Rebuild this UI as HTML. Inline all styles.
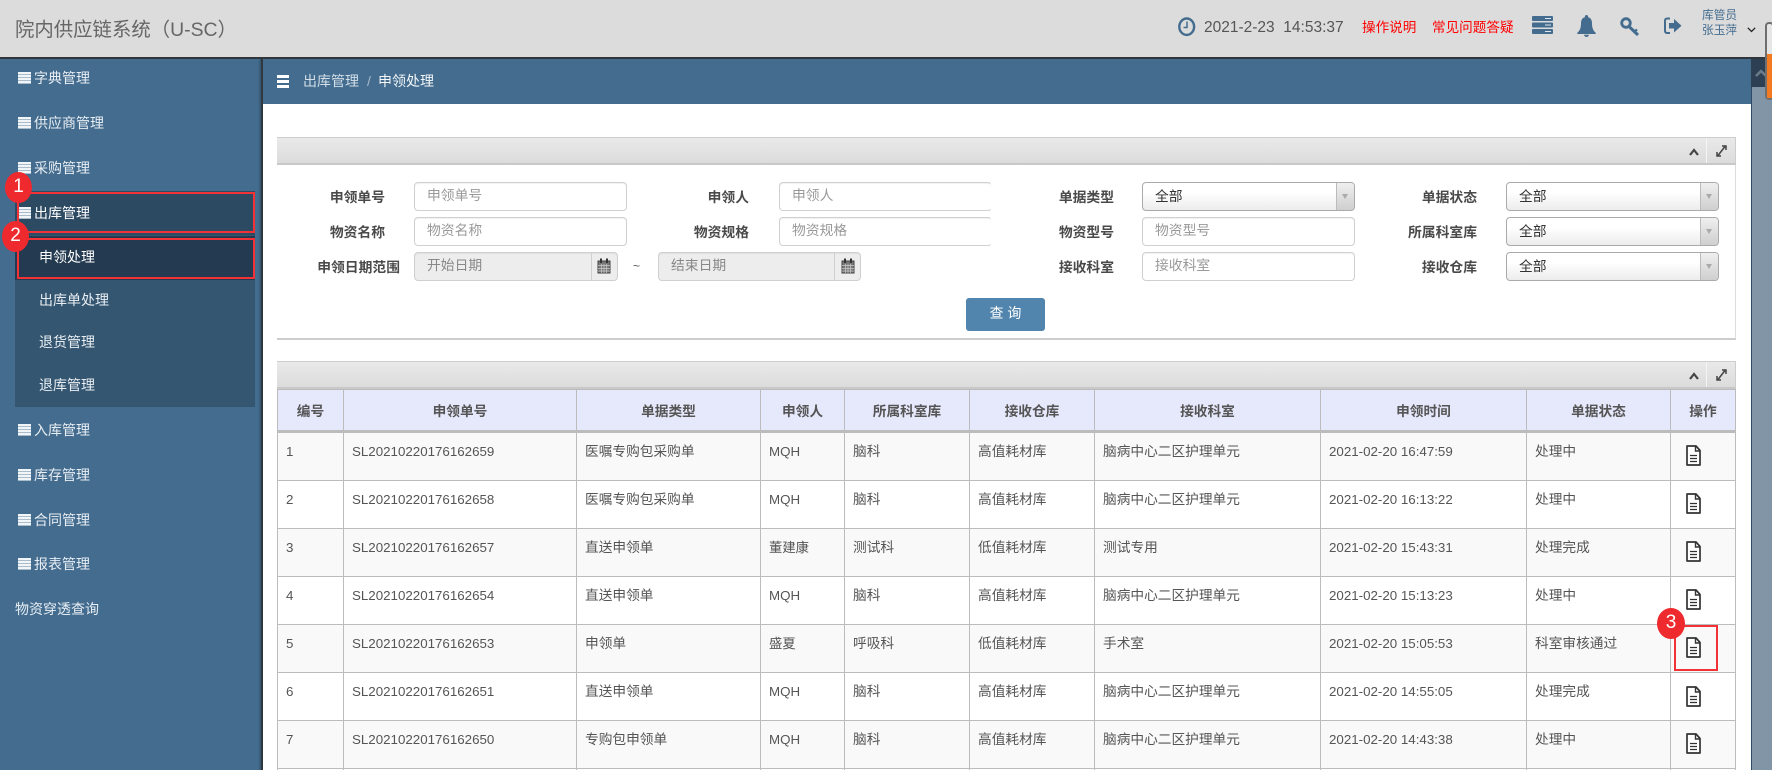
<!DOCTYPE html>
<html lang="zh">
<head>
<meta charset="utf-8">
<title>院内供应链系统</title>
<style>
html,body{margin:0;padding:0;width:1772px;height:770px;overflow:hidden;background:#fff;}
body{position:relative;font-family:"Liberation Sans","Noto Sans CJK SC",sans-serif;font-size:13.33px;color:#555;}
.a{position:absolute;box-sizing:border-box;white-space:nowrap;}
.t{position:absolute;white-space:nowrap;line-height:16px;}
.m{position:absolute;white-space:nowrap;line-height:16px;font-size:14px;color:#e8eef3;}
.li{position:absolute;left:18px;width:13px;height:12px;background:repeating-linear-gradient(180deg,#f2f5f7 0,#f2f5f7 2px,#a9bccb 2px,#a9bccb 3px);}
.red{position:absolute;box-sizing:border-box;border:2px solid #f33237;}
.bdg{position:absolute;box-sizing:border-box;background:#ee2a2e;border-radius:50%;color:#fff;font-size:19px;text-align:center;line-height:30px;width:27px;height:31px;}
.panel-h{position:absolute;left:277px;width:1459px;height:28px;box-sizing:border-box;background:linear-gradient(180deg,#e9e9e9,#dcdcdc);border:1px solid #cdcdcd;border-left:0;border-bottom:2px solid #c8c8c8;}
.lb{position:absolute;white-space:nowrap;line-height:16px;font-weight:bold;font-size:13.8px;color:#4a4a4a;text-align:right;width:120px;}
.in{position:absolute;box-sizing:border-box;height:29px;border:1px solid #d0d0d0;border-radius:4px;background:#fff;box-shadow:inset 0 1px 1px rgba(0,0,0,.06);color:#999;font-size:13.8px;line-height:26px;padding-left:12px;white-space:nowrap;}
.dt{background:#ededed;color:#888;overflow:hidden;}
.dt i{position:absolute;right:0;top:0;width:25px;height:27px;border-left:1px solid #d0d0d0;}
.sel{position:absolute;box-sizing:border-box;height:29px;border:1px solid #aaa;border-radius:4px;background:linear-gradient(180deg,#fff 35%,#ececec);color:#333;font-size:13.8px;line-height:28px;padding-left:12px;overflow:hidden;white-space:nowrap;}
.sel i{position:absolute;right:0;top:0;width:17px;height:27px;border-left:1px solid #bbb;background:linear-gradient(180deg,#efefef,#cfcfcf);}
.sel i:after{content:"";position:absolute;left:5px;top:11px;border:3px solid transparent;border-top:5px solid #aaa;border-bottom:0;}
table{position:absolute;left:277px;top:389px;border-collapse:collapse;table-layout:fixed;width:1458px;font-size:13.33px;color:#555;}
th,td{border:1px solid #bcbcbc;overflow:hidden;white-space:nowrap;padding:0;}
th{background:#e6e8fc;height:40px;font-weight:bold;font-size:13.7px;color:#555;text-align:center;border-bottom:3px solid #bcbcbc;}
td{vertical-align:top;padding:11px 0 0 8px;line-height:16px;height:36px;box-sizing:content-box;}
td:nth-child(3),td:nth-child(5),td:nth-child(6),td:nth-child(7),td:nth-child(9){font-size:13.7px;}
tr.o td{background:#f9f9f9;}
tr.end td{padding:0;height:2px;line-height:2px;font-size:0;border-bottom:0;}
svg{position:absolute;overflow:visible;}
</style>
</head>
<body>
<!-- header -->
<div class="a" style="left:0;top:0;width:1772px;height:57px;background:#dcdcdc;"></div>
<div class="a" style="left:0;top:57px;width:1772px;height:2px;background:#30363c;"></div>
<div class="t" style="left:15px;top:18px;font-size:19.4px;line-height:24px;color:#666;">院内供应链系统（U-SC）</div>

<svg style="left:1178px;top:17px" width="18" height="20" viewBox="0 0 18 20"><ellipse cx="8.7" cy="9.7" rx="7.4" ry="8.2" fill="none" stroke="#436c8f" stroke-width="2.4"/><path d="M9 4.5V10.5H5.5" fill="none" stroke="#436c8f" stroke-width="1.5"/></svg>
<div class="t" style="left:1204px;top:20px;font-size:15.5px;color:#555;">2021-2-23&nbsp; 14:53:37</div>
<div class="t" style="left:1362px;top:20px;font-size:13.6px;color:#f00;">操作说明</div>
<div class="t" style="left:1432px;top:20px;font-size:13.6px;color:#f00;">常见问题答疑</div>

<svg style="left:1532px;top:16px" width="21" height="18" viewBox="0 0 21 18"><g fill="#436c8f"><rect width="21" height="5" rx="1"/><rect y="6.5" width="21" height="5" rx="1"/><rect y="13" width="21" height="5" rx="1"/></g><g fill="#dfe6ec"><rect x="13" y="2" width="6" height="1"/><rect x="13" y="8.5" width="6" height="1"/><rect x="13" y="15" width="6" height="1"/></g></svg>
<svg style="left:1577px;top:15px" width="19" height="22" viewBox="0 0 19 22"><path d="M9.500 0C8.300 0 7.800 1 7.800 2.200C4.800 3 4 5.500 4 8.500C4 12.500 3 15.500 0.300 17.800V19H18.700V17.800C16 15.500 15 12.500 15 8.500C15 5.500 14.200 3 11.200 2.200C11.200 1 10.700 0 9.500 0ZM7 19.800C7.200 21.200 8.200 22 9.500 22C10.800 22 11.800 21.200 12 19.800Z" fill="#436c8f"/></svg>
<svg style="left:1620px;top:17px" width="20" height="20" viewBox="0 0 20 20"><g fill="none" stroke="#436c8f"><circle cx="6" cy="6" r="4.300" stroke-width="2.800"/><path d="M9 9.500L18 18" stroke-width="3"/><path d="M14.500 14.500L17 12.500" stroke-width="2.400"/></g></svg>
<svg style="left:1664px;top:17px" width="18" height="18" viewBox="0 0 18 18"><path d="M6 1.500H3C1.800 1.500 1 2.300 1 3.500V14C1 15.200 1.800 16 3 16H6" fill="none" stroke="#436c8f" stroke-width="2"/><path d="M5 6H10V2L17.500 8.800L10 15.500V11.500H5Z" fill="#436c8f"/></svg>
<div class="t" style="left:1702px;top:9px;font-size:11.7px;line-height:14.500px;color:#436c8f;">库管员<br>张玉萍</div>
<svg style="left:1747px;top:27px" width="9" height="6" viewBox="0 0 9 6"><path d="M.8 .8L4.500 4.500L8.200 .8" fill="none" stroke="#222" stroke-width="1.300"/></svg>

<!-- sidebar -->
<div class="a" style="left:0;top:59px;width:260px;height:711px;background:#436c8f;"></div>
<div class="a" style="left:258px;top:59px;width:3px;height:711px;background:linear-gradient(90deg,#436c8f,#35536c);"></div>
<div class="a" style="left:261px;top:59px;width:2px;height:711px;background:#30383f;"></div>
<div class="a" style="left:15px;top:235px;width:240px;height:172px;background:#355670;"></div>
<div class="a" style="left:15px;top:191px;width:240px;height:44px;background:#2d4a63;"></div>
<div class="a" style="left:15px;top:236px;width:240px;height:44px;background:#243a50;"></div>

<div class="li" style="top:72px"></div><div class="m" style="left:34px;top:70px">字典管理</div>
<div class="li" style="top:117px"></div><div class="m" style="left:34px;top:115px">供应商管理</div>
<div class="li" style="top:162px"></div><div class="m" style="left:34px;top:160px">采购管理</div>
<div class="li" style="top:207px"></div><div class="m" style="left:34px;top:205px;color:#fff">出库管理</div>
<div class="m" style="left:39px;top:249px;color:#fff">申领处理</div>
<div class="m" style="left:39px;top:292px">出库单处理</div>
<div class="m" style="left:39px;top:334px">退货管理</div>
<div class="m" style="left:39px;top:377px">退库管理</div>
<div class="li" style="top:424px"></div><div class="m" style="left:34px;top:422px">入库管理</div>
<div class="li" style="top:469px"></div><div class="m" style="left:34px;top:467px">库存管理</div>
<div class="li" style="top:514px"></div><div class="m" style="left:34px;top:512px">合同管理</div>
<div class="li" style="top:558px"></div><div class="m" style="left:34px;top:556px">报表管理</div>
<div class="m" style="left:15px;top:601px">物资穿透查询</div>

<!-- main top bar -->
<div class="a" style="left:263px;top:59px;width:1488px;height:45px;background:#436c8f;"></div>
<div class="a" style="left:277px;top:75px;width:12px;height:3px;background:#fff;"></div>
<div class="a" style="left:277px;top:80px;width:12px;height:3px;background:#fff;"></div>
<div class="a" style="left:277px;top:85px;width:12px;height:3px;background:#fff;"></div>
<div class="m" style="left:303px;top:73px;color:#d3dee7">出库管理</div>
<div class="m" style="left:367px;top:73px;color:#a9bccb">/</div>
<div class="m" style="left:378px;top:73px;color:#f4f7f9">申领处理</div>

<!-- right rail -->
<div class="a" style="left:1751px;top:59px;width:21px;height:711px;background:#8295a6;border-left:1px solid #2f4a66;"></div>
<div class="a" style="left:1751px;top:59px;width:21px;height:28px;background:#2d3f52;"></div>
<svg style="left:1755px;top:69px" width="12" height="8" viewBox="0 0 12 8"><path d="M1 7L6 2L11 7" fill="none" stroke="#6d7c8a" stroke-width="2.500"/></svg>
<div class="a" style="left:1765px;top:22px;width:9px;height:78px;border:2px solid #6f6f6f;border-radius:4px;background:#e6e6e6;"></div>
<div class="a" style="left:1767px;top:54px;width:5px;height:44px;background:#f47a21;"></div>

<!-- panel 1 -->
<div class="a" style="left:277px;top:165px;width:1459px;height:175px;border-right:1px solid #dcdcdc;border-bottom:2px solid #cdcdcd;"></div>
<div class="panel-h" style="top:137px"></div>
<div class="a" style="left:1706px;top:138px;width:1px;height:25px;background:#f4f4f4;"></div>
<svg style="left:1689px;top:148px" width="10" height="8" viewBox="0 0 10 8"><path d="M1 7L5 2L9 7" fill="none" stroke="#444" stroke-width="2.200"/></svg>
<svg style="left:1716px;top:145px" width="11" height="12" viewBox="0 0 11 12"><path d="M2 10.500L9 1.500M6 1H10V5M1 7V11H5" fill="none" stroke="#444" stroke-width="1.500"/></svg>

<div class="lb" style="left:265px;top:190px">申领单号</div>
<div class="lb" style="left:265px;top:225px">物资名称</div>
<div class="lb" style="left:280px;top:260px">申领日期范围</div>
<div class="lb" style="left:629px;top:190px">申领人</div>
<div class="lb" style="left:629px;top:225px">物资规格</div>
<div class="lb" style="left:994px;top:190px">单据类型</div>
<div class="lb" style="left:994px;top:225px">物资型号</div>
<div class="lb" style="left:994px;top:260px">接收科室</div>
<div class="lb" style="left:1357px;top:190px">单据状态</div>
<div class="lb" style="left:1357px;top:225px">所属科室库</div>
<div class="lb" style="left:1357px;top:260px">接收仓库</div>

<div class="in" style="left:414px;top:182px;width:213px">申领单号</div>
<div class="in" style="left:414px;top:217px;width:213px">物资名称</div>
<div class="in dt" style="left:414px;top:252px;width:204px">开始日期<i></i></div>
<svg style="left:597px;top:258px" width="14" height="16" viewBox="0 0 14 16"><path d="M1 3H13V15H1Z" fill="#777" stroke="#444" stroke-width="1"/><path d="M4 .5V5M10 .5V5" stroke="#333" stroke-width="2"/><path d="M1 7.500H13M1 10.500H13M1 13H13M4.500 6V15M7 6V15M9.500 6V15" stroke="#ccc" stroke-width=".7"/></svg>
<div class="t" style="left:633px;top:258px;color:#555;font-size:12px">~</div>
<div class="in dt" style="left:658px;top:252px;width:203px">结束日期<i></i></div>
<svg style="left:841px;top:258px" width="14" height="16" viewBox="0 0 14 16"><path d="M1 3H13V15H1Z" fill="#777" stroke="#444" stroke-width="1"/><path d="M4 .5V5M10 .5V5" stroke="#333" stroke-width="2"/><path d="M1 7.500H13M1 10.500H13M1 13H13M4.500 6V15M7 6V15M9.500 6V15" stroke="#ccc" stroke-width=".7"/></svg>
<div class="in" style="left:779px;top:182px;width:213px;border-right-color:transparent">申领人</div>
<div class="in" style="left:779px;top:217px;width:213px;border-right-color:transparent">物资规格</div>
<div class="sel" style="left:1142px;top:182px;width:213px">全部<i></i></div>
<div class="in" style="left:1142px;top:217px;width:213px">物资型号</div>
<div class="in" style="left:1142px;top:252px;width:213px">接收科室</div>
<div class="sel" style="left:1506px;top:182px;width:213px">全部<i></i></div>
<div class="sel" style="left:1506px;top:217px;width:213px">全部<i></i></div>
<div class="sel" style="left:1506px;top:252px;width:213px">全部<i></i></div>

<div class="a" style="left:966px;top:298px;width:79px;height:33px;background:#5185ae;border-radius:3px;color:#fff;font-size:14px;line-height:30px;text-align:center;">查 询</div>

<!-- panel 2 -->
<div class="panel-h" style="top:361px"></div>
<div class="a" style="left:1706px;top:362px;width:1px;height:25px;background:#f4f4f4;"></div>
<svg style="left:1689px;top:372px" width="10" height="8" viewBox="0 0 10 8"><path d="M1 7L5 2L9 7" fill="none" stroke="#444" stroke-width="2.200"/></svg>
<svg style="left:1716px;top:369px" width="11" height="12" viewBox="0 0 11 12"><path d="M2 10.500L9 1.500M6 1H10V5M1 7V11H5" fill="none" stroke="#444" stroke-width="1.500"/></svg>

<table>
<colgroup><col style="width:66px"><col style="width:233px"><col style="width:184px"><col style="width:84px"><col style="width:125px"><col style="width:125px"><col style="width:226px"><col style="width:206px"><col style="width:144px"><col style="width:65px"></colgroup>
<tr><th>编号</th><th>申领单号</th><th>单据类型</th><th>申领人</th><th>所属科室库</th><th>接收仓库</th><th>接收科室</th><th>申领时间</th><th>单据状态</th><th>操作</th></tr>
<tr class="o"><td>1</td><td>SL20210220176162659</td><td>医嘱专购包采购单</td><td>MQH</td><td>脑科</td><td>高值耗材库</td><td>脑病中心二区护理单元</td><td>2021-02-20 16:47:59</td><td>处理中</td><td></td></tr>
<tr><td>2</td><td>SL20210220176162658</td><td>医嘱专购包采购单</td><td>MQH</td><td>脑科</td><td>高值耗材库</td><td>脑病中心二区护理单元</td><td>2021-02-20 16:13:22</td><td>处理中</td><td></td></tr>
<tr class="o"><td>3</td><td>SL20210220176162657</td><td>直送申领单</td><td>董建康</td><td>测试科</td><td>低值耗材库</td><td>测试专用</td><td>2021-02-20 15:43:31</td><td>处理完成</td><td></td></tr>
<tr><td style="height:35px">4</td><td>SL20210220176162654</td><td>直送申领单</td><td>MQH</td><td>脑科</td><td>高值耗材库</td><td>脑病中心二区护理单元</td><td>2021-02-20 15:13:23</td><td>处理中</td><td></td></tr>
<tr class="o"><td>5</td><td>SL20210220176162653</td><td>申领单</td><td>盛夏</td><td>呼吸科</td><td>低值耗材库</td><td>手术室</td><td>2021-02-20 15:05:53</td><td>科室审核通过</td><td></td></tr>
<tr><td>6</td><td>SL20210220176162651</td><td>直送申领单</td><td>MQH</td><td>脑科</td><td>高值耗材库</td><td>脑病中心二区护理单元</td><td>2021-02-20 14:55:05</td><td>处理完成</td><td></td></tr>
<tr class="o"><td>7</td><td>SL20210220176162650</td><td>专购包申领单</td><td>MQH</td><td>脑科</td><td>高值耗材库</td><td>脑病中心二区护理单元</td><td>2021-02-20 14:43:38</td><td>处理中</td><td></td></tr>
<tr class="end"><td></td><td></td><td></td><td></td><td></td><td></td><td></td><td></td><td></td><td></td></tr>
</table>

<svg width="0" height="0" style="left:0;top:0"><defs><g id="doc"><path d="M1 1H10L14 5.500V20H1Z" fill="#fff" stroke="#333" stroke-width="1.700" stroke-linejoin="round"/><path d="M9.500 1V6H14" fill="none" stroke="#333" stroke-width="1.400"/><path d="M4 10.500H11M4 13.500H11M4 16.500H11" stroke="#333" stroke-width="1.300"/></g></defs></svg>
<svg style="left:1686px;top:445px" width="15" height="21" viewBox="0 0 15 21"><use href="#doc"/></svg>
<svg style="left:1686px;top:493px" width="15" height="21" viewBox="0 0 15 21"><use href="#doc"/></svg>
<svg style="left:1686px;top:541px" width="15" height="21" viewBox="0 0 15 21"><use href="#doc"/></svg>
<svg style="left:1686px;top:589px" width="15" height="21" viewBox="0 0 15 21"><use href="#doc"/></svg>
<svg style="left:1686px;top:637px" width="15" height="21" viewBox="0 0 15 21"><use href="#doc"/></svg>
<svg style="left:1686px;top:686px" width="15" height="21" viewBox="0 0 15 21"><use href="#doc"/></svg>
<svg style="left:1686px;top:733px" width="15" height="21" viewBox="0 0 15 21"><use href="#doc"/></svg>

<!-- annotations -->
<div class="red" style="left:17px;top:192px;width:238px;height:41px;"></div>
<div class="red" style="left:17px;top:238px;width:238px;height:41px;"></div>
<div class="red" style="left:1674px;top:625px;width:44px;height:46px;"></div>
<div class="bdg" style="left:5px;top:172px;">1</div>
<div class="bdg" style="left:2px;top:221px;">2</div>
<div class="bdg" style="left:1657px;top:608px;width:28px;">3</div>
</body>
</html>
